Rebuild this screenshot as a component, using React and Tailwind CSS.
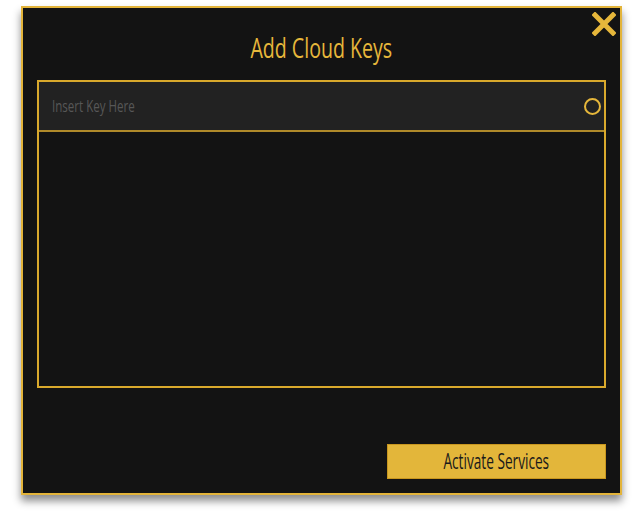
import React from "react";

const font = { fontFamily: "'Open Sans', 'Noto Sans', sans-serif" };

export default function App() {
  return (
    <div className="w-[642px] h-[522px] bg-white pl-[21px] pt-[6px]" style={font}>
      <div className="relative w-[601px] h-[489px] bg-[#131313] border-2 border-[#e3b43a] shadow-[0_6px_8px_rgba(0,0,0,0.45)] flex flex-col px-[14px]">
        <button className="absolute right-[3px] top-[3px] w-[26px] h-[26px] flex items-center justify-center">
          <svg width="24" height="24" viewBox="0 0 24 24">
            <path d="M3 3 L21 21 M21 3 L3 21" stroke="#e6b73b" strokeWidth="5" strokeLinecap="square" />
          </svg>
        </button>
        <h1 className="text-center text-[#e6b73b] text-[28px] leading-none mt-[25px] h-[47px]">
          <span className="inline-block scale-x-[0.7]">Add Cloud Keys</span>
        </h1>
        <div className="h-[308px] border-2 border-[#d9a92c] flex flex-col">
          <div className="h-[50px] bg-[#222222] border-b-2 border-[#b08a2a] flex items-center justify-between pl-[13px] pr-[3px]">
            <span className="inline-block origin-left scale-x-[0.68] text-[#575757] text-[17px]">Insert Key Here</span>
            <span className="w-[17px] h-[17px] rounded-full border-2 border-[#e6b73b]" />
          </div>
        </div>
        <div className="flex-1 flex items-end justify-end pb-[14px]">
          <button className="w-[219px] h-[35px] bg-[#e3b63a] border border-[#c9971f] text-[#1a1a1a] text-[21px] leading-none">
            <span className="inline-block scale-x-[0.65]">Activate Services</span>
          </button>
        </div>
      </div>
    </div>
  );
}
